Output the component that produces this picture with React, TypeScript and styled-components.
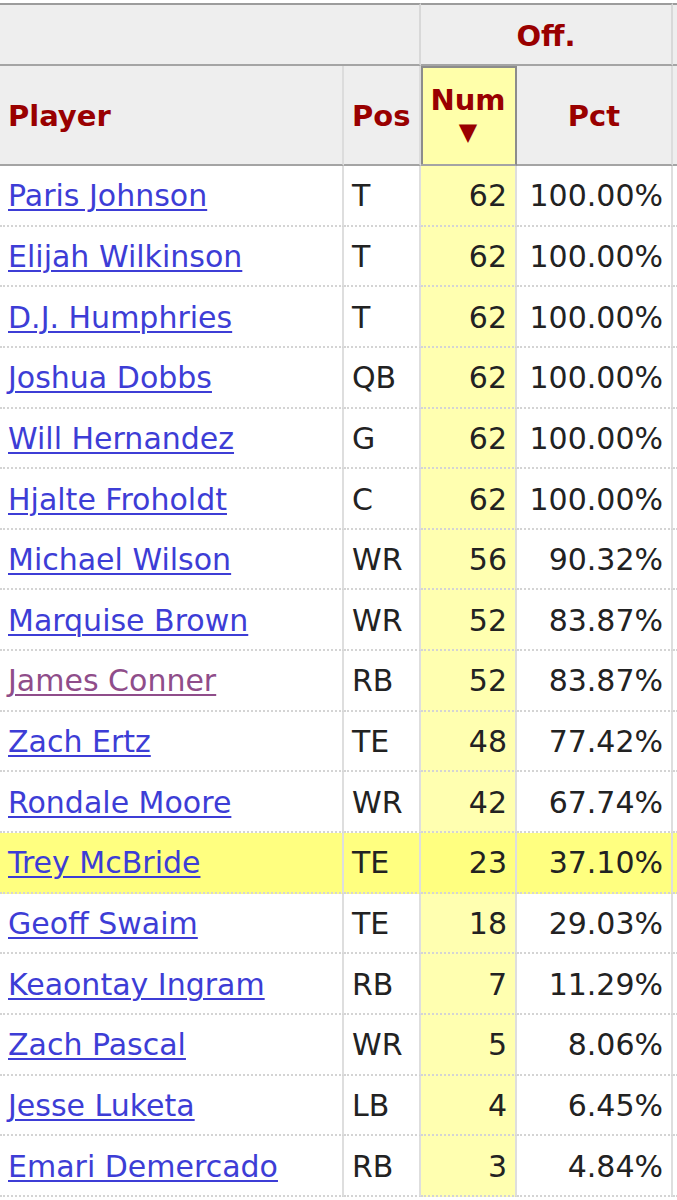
import React from "react";
import styled, { createGlobalStyle } from "styled-components";

const GlobalStyle = createGlobalStyle`
  html, body {
    margin: 0;
    padding: 0;
    background: #ffffff;
    overflow: hidden;
  }
  body {
    font-family: "DejaVu Sans", Verdana, sans-serif;
  }
`;

const Frame = styled.div`
  width: 677px;
  overflow: hidden;
  padding-top: 3px;
`;

const Table = styled.table`
  border-collapse: separate;
  border-spacing: 0;
  table-layout: fixed;
  width: 733px;
  font-family: "DejaVu Sans", Verdana, sans-serif;
  font-size: 30px;
  color: #222222;
`;

const GroupRow = styled.tr`
  height: 63px;
`;

const GroupCell = styled.th<{ $last?: boolean }>`
  background: #eeeeee;
  border-top: 2px solid #9c9c9c;
  border-bottom: 2px solid #a4a4a4;
  border-right: ${(p) => (p.$last ? "none" : "2px solid #d8d8d8")};
  color: #990000;
  font-weight: bold;
  font-size: 29px;
  text-align: center;
  vertical-align: middle;
  padding: 2px 0 0;
`;

const HeadRow = styled.tr`
  height: 100px;
`;

const HeadCell = styled.th<{ $align?: string; $sorted?: boolean; $last?: boolean }>`
  background: ${(p) => (p.$sorted ? "#ffffaa" : "#eeeeee")};
  border-bottom: 2px solid #a4a4a4;
  border-right: ${(p) =>
    p.$last ? "none" : p.$sorted ? "2px solid #8c8c8c" : "2px solid #dcdcdc"};
  box-shadow: ${(p) => (p.$sorted ? "inset 2px 2px 0 #8c8c8c" : "none")};
  color: #990000;
  font-weight: bold;
  font-size: 29px;
  line-height: 32px;
  text-align: ${(p) => p.$align || "left"};
  vertical-align: middle;
  padding: 2px 8px 0;
`;

const Arrow = styled.span`
  display: block;
  font-size: 24px;
  line-height: 32px;
`;

const BodyRow = styled.tr<{ $hl?: boolean }>`
  height: 60.65px;
  background: ${(p) => (p.$hl ? "#ffff80" : "#ffffff")};
`;

const Cell = styled.td<{ $align?: string; $sorted?: boolean; $hl?: boolean; $last?: boolean }>`
  background: ${(p) => (p.$hl ? "#ffff80" : p.$sorted ? "#ffffb0" : "transparent")};
  border-bottom: 2px dotted #d4d4d4;
  border-right: ${(p) => (p.$last ? "none" : "2px solid #dedede")};
  text-align: ${(p) => p.$align || "left"};
  vertical-align: middle;
  padding: 1px 8px 0;
  white-space: nowrap;
  line-height: 35px;
`;

const PlayerLink = styled.a<{ $visited?: boolean }>`
  color: ${(p) => (p.$visited ? "#8f4d8a" : "#3d3dd6")};
  text-decoration: underline;
  text-decoration-thickness: 2px;
  text-underline-offset: 3px;
`;

type Row = {
  name: string;
  pos: string;
  num: number;
  pct: string;
  visited?: boolean;
  hl?: boolean;
};

const rows: Row[] = [
  { name: "Paris Johnson", pos: "T", num: 62, pct: "100.00%" },
  { name: "Elijah Wilkinson", pos: "T", num: 62, pct: "100.00%" },
  { name: "D.J. Humphries", pos: "T", num: 62, pct: "100.00%" },
  { name: "Joshua Dobbs", pos: "QB", num: 62, pct: "100.00%" },
  { name: "Will Hernandez", pos: "G", num: 62, pct: "100.00%" },
  { name: "Hjalte Froholdt", pos: "C", num: 62, pct: "100.00%" },
  { name: "Michael Wilson", pos: "WR", num: 56, pct: "90.32%" },
  { name: "Marquise Brown", pos: "WR", num: 52, pct: "83.87%" },
  { name: "James Conner", pos: "RB", num: 52, pct: "83.87%", visited: true },
  { name: "Zach Ertz", pos: "TE", num: 48, pct: "77.42%" },
  { name: "Rondale Moore", pos: "WR", num: 42, pct: "67.74%" },
  { name: "Trey McBride", pos: "TE", num: 23, pct: "37.10%", hl: true },
  { name: "Geoff Swaim", pos: "TE", num: 18, pct: "29.03%" },
  { name: "Keaontay Ingram", pos: "RB", num: 7, pct: "11.29%" },
  { name: "Zach Pascal", pos: "WR", num: 5, pct: "8.06%" },
  { name: "Jesse Luketa", pos: "LB", num: 4, pct: "6.45%" },
  { name: "Emari Demercado", pos: "RB", num: 3, pct: "4.84%" },
];

export default function App() {
  return (
    <>
      <GlobalStyle />
      <Frame>
        <Table>
          <colgroup>
            <col style={{ width: 344 }} />
            <col style={{ width: 77 }} />
            <col style={{ width: 96 }} />
            <col style={{ width: 156 }} />
            <col style={{ width: 60 }} />
          </colgroup>
          <thead>
            <GroupRow>
              <GroupCell colSpan={2}></GroupCell>
              <GroupCell colSpan={2}>Off.</GroupCell>
              <GroupCell $last></GroupCell>
            </GroupRow>
            <HeadRow>
              <HeadCell>Player</HeadCell>
              <HeadCell>Pos</HeadCell>
              <HeadCell $align="center" $sorted>
                Num
                <Arrow>▼</Arrow>
              </HeadCell>
              <HeadCell $align="center">Pct</HeadCell>
              <HeadCell $last></HeadCell>
            </HeadRow>
          </thead>
          <tbody>
            {rows.map((r) => (
              <BodyRow key={r.name} $hl={r.hl}>
                <Cell $hl={r.hl}>
                  <PlayerLink href="#" $visited={r.visited}>
                    {r.name}
                  </PlayerLink>
                </Cell>
                <Cell $hl={r.hl}>{r.pos}</Cell>
                <Cell $align="right" $sorted $hl={r.hl}>
                  {r.num}
                </Cell>
                <Cell $align="right" $hl={r.hl}>
                  {r.pct}
                </Cell>
                <Cell $hl={r.hl} $last></Cell>
              </BodyRow>
            ))}
          </tbody>
        </Table>
      </Frame>
    </>
  );
}
